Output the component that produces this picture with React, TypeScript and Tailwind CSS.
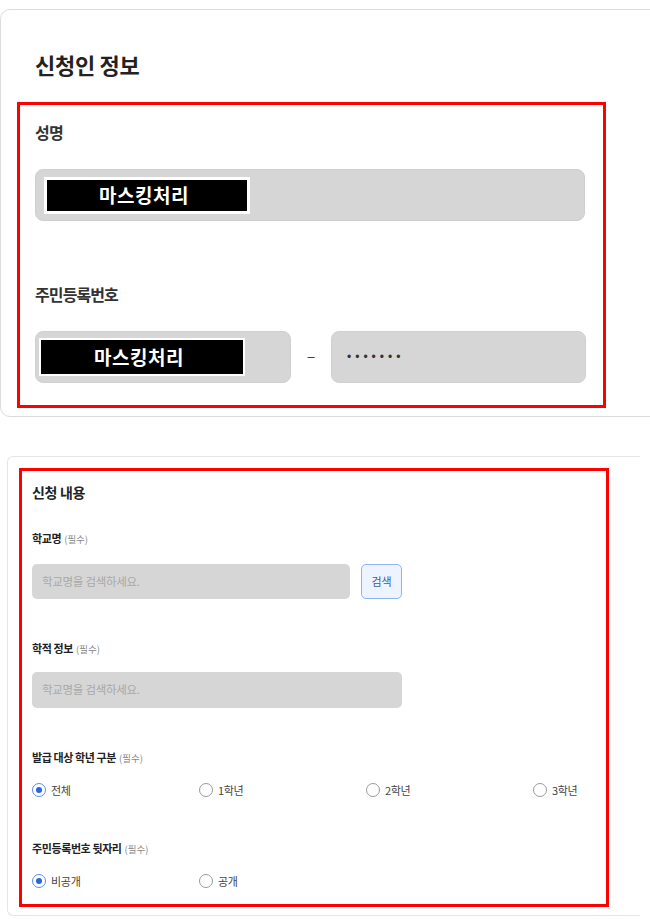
const kr = 'font-["Noto_Sans_CJK_KR",sans-serif]'

function MaskBox({ className }: { className: string }) {
  return (
    <div
      className={`flex items-center justify-center bg-black text-white font-semibold text-[19px] tracking-[0.5px] pr-[6px] ${className}`}
    >
      마스킹처리
    </div>
  )
}

function Label({ text, className }: { text: string; className: string }) {
  return (
    <div className={`flex items-baseline h-[16px] leading-[16px] ${className}`}>
      <span className="text-[11px] font-bold text-[#222] tracking-[-0.4px]">{text}</span>
      <span className="ml-[3px] text-[9.5px] text-[#888]">(필수)</span>
    </div>
  )
}

function Radio({ label, checked }: { label: string; checked?: boolean }) {
  return (
    <div className="flex shrink-0 items-center w-[167px] h-[16px]">
      <span
        className={`flex shrink-0 items-center justify-center w-[14px] h-[14px] rounded-full bg-white ${
          checked ? 'border-[1.5px] border-[#5b8def]' : 'border border-[#9a9a9a]'
        }`}
      >
        {checked && <span className="w-[6px] h-[6px] rounded-full bg-[#2a64e0]" />}
      </span>
      <span className="ml-[5px] text-[11px] text-[#444] tracking-[-0.3px]">{label}</span>
    </div>
  )
}

export default function App() {
  return (
    <div className={`w-[650px] h-[919px] overflow-hidden bg-white ${kr}`}>
      {/* 신청인 정보 */}
      <section className="mt-[9px] w-[700px] h-[408px] rounded-[10px] border border-[#dcdcdc] px-[16px]">
        <h2 className="mt-[39px] pl-[18px] h-[30px] leading-[30px] text-[22px] font-bold text-[#222] tracking-[-0.3px]">
          신청인 정보
        </h2>

        <div className="mt-[23px] w-[589px] border-[3px] border-[#ff0000] px-[15px] pt-[15px] pb-[22px]">
          <p className="h-[24px] leading-[24px] text-[16px] font-bold text-[#333] tracking-[-0.6px]">성명</p>
          <div className="mt-[25px] w-[550px] h-[52px] flex items-center rounded-[8px] border border-[#cfcfcf] bg-[#d6d6d6] pl-[8px]">
            <MaskBox className="w-[206px] h-[37px] border-[3px] border-white" />
          </div>

          <p className="mt-[61px] h-[24px] leading-[24px] text-[16px] font-bold text-[#333] tracking-[-0.9px]">
            주민등록번호
          </p>
          <div className="mt-[25px] flex items-center">
            <div className="w-[256px] h-[52px] flex items-center rounded-[8px] border border-[#d0d0d0] bg-[#d6d6d6] pl-[3px]">
              <MaskBox className="w-[206px] h-[38px] border-[2px] border-white" />
            </div>
            <div className="w-[40px] text-center text-[13px] text-[#333] font-['Liberation_Sans',sans-serif]">–</div>
            <div className="w-[255px] h-[52px] flex items-center rounded-[8px] border border-[#d0d0d0] bg-[#d6d6d6] pl-[15px]">
              <span className="text-[12px] tracking-[4px] text-[#333] font-['Liberation_Sans',sans-serif]">•••••••</span>
            </div>
          </div>
        </div>
      </section>

      {/* 신청 내용 */}
      <section className="mt-[39px] ml-[7px] w-[633px] h-[460px] rounded-l-[6px] border border-r-0 border-[#e6e6e6] pl-[11px] pt-[11px]">
        <div className="w-[590px] border-[3px] border-[#ff0000] pl-[10px] pt-[11px] pb-[15px]">
          <h3 className="h-[20px] leading-[20px] text-[14px] font-bold text-[#222] tracking-[-0.3px]">신청 내용</h3>

          <Label text="학교명" className="mt-[28px]" />
          <div className="mt-[18px] flex items-center">
            <div className="w-[318px] h-[35px] flex items-center rounded-[5px] bg-[#d6d6d6] pl-[10px] text-[11.5px] text-[#a8a8a8] tracking-[-0.3px]">
              학교명을 검색하세요.
            </div>
            <button className="ml-[11px] w-[41px] h-[35px] rounded-[5px] border border-[#8fb3f5] bg-[#eef4ff] text-[11px] text-[#3d5a9e]">
              검색
            </button>
          </div>

          <Label text="학적 정보" className="mt-[41px]" />
          <div className="mt-[16px] w-[370px] h-[36px] flex items-center rounded-[5px] bg-[#d6d6d6] pl-[10px] text-[11.5px] text-[#a8a8a8] tracking-[-0.3px]">
            학교명을 검색하세요.
          </div>

          <Label text="발급 대상 학년 구분" className="mt-[41px]" />
          <div className="mt-[17px] flex">
            <Radio label="전체" checked />
            <Radio label="1학년" />
            <Radio label="2학년" />
            <Radio label="3학년" />
          </div>

          <Label text="주민등록번호 뒷자리" className="mt-[42px]" />
          <div className="mt-[17px] flex">
            <Radio label="비공개" checked />
            <Radio label="공개" />
          </div>
        </div>
      </section>
    </div>
  )
}
